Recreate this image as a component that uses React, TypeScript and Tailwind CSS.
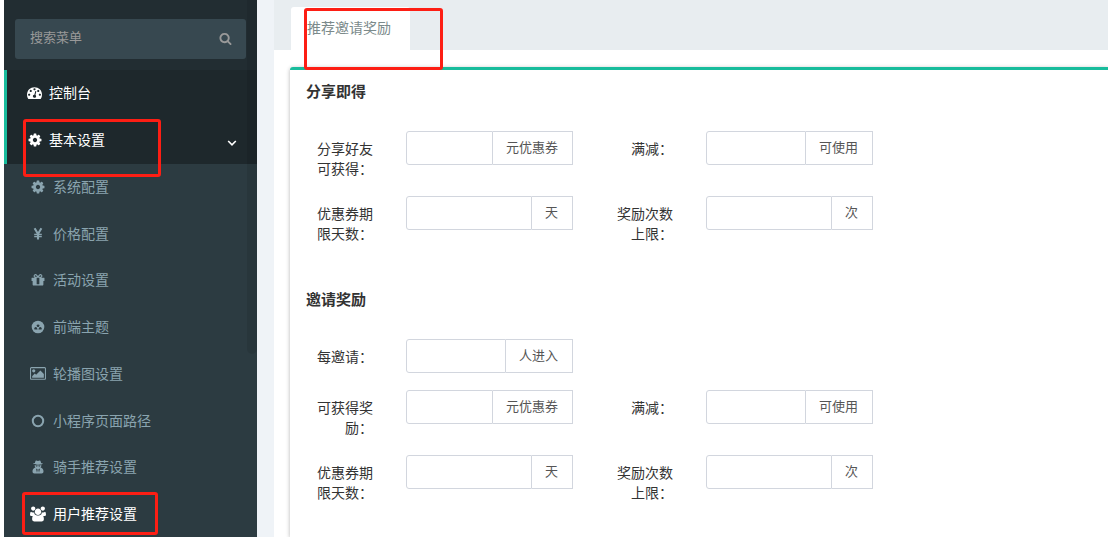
import type { ReactNode } from "react";

type Glyph = { box: string; width: string; path: string };

const glyphs: Record<string, Glyph> = {
  search: {
    box: "0 0 1792 1792",
    width: "w-[13px]",
    path: "M1216 832q0-185-131.5-316.5t-316.5-131.5-316.5 131.5-131.5 316.5 131.5 316.5 316.5 131.5 316.5-131.5 131.5-316.5zm512 832q0 52-38 90t-90 38q-54 0-90-38l-343-342q-179 124-399 124-143 0-273.5-55.5t-225-150-150-225-55.5-273.5 55.5-273.5 150-225 225-150 273.5-55.5 273.5 55.5 225 150 150 225 55.5 273.5q0 220-124 399l343 343q37 37 37 90z",
  },
  dashboard: {
    box: "0 0 1792 1792",
    width: "w-[15px]",
    path: "M384 1152q0-53-37.5-90.5t-90.5-37.5-90.5 37.5-37.5 90.5 37.5 90.5 90.5 37.5 90.5-37.5 37.5-90.5zm192-448q0-53-37.5-90.5t-90.5-37.5-90.5 37.5-37.5 90.5 37.5 90.5 90.5 37.5 90.5-37.5 37.5-90.5zm428 481l101-382q6-26-7.5-48.5t-38.5-29.5-48 6.5-30 39.5l-101 382q-60 5-107 43.5t-63 98.5q-20 77 20 146t117 89 146-20 89-117q16-60-6-117t-72-91zm660-33q0-53-37.5-90.5t-90.5-37.5-90.5 37.5-37.5 90.5 37.5 90.5 90.5 37.5 90.5-37.5 37.5-90.5zm-640-640q0-53-37.5-90.5t-90.5-37.5-90.5 37.5-37.5 90.5 37.5 90.5 90.5 37.5 90.5-37.5 37.5-90.5zm448 192q0-53-37.5-90.5t-90.5-37.5-90.5 37.5-37.5 90.5 37.5 90.5 90.5 37.5 90.5-37.5 37.5-90.5zm320 448q0 261-141 483-19 29-54 29h-1402q-35 0-54-29-141-221-141-483 0-182 71-348t191-286 286-191 348-71 348 71 286 191 191 286 71 348z",
  },
  cog: {
    box: "64 64 1664 1664",
    width: "w-[14px]",
    path: "M1152 896q0-106-75-181t-181-75-181 75-75 181 75 181 181 75 181-75 75-181zm512-109v222q0 12-8 23t-20 13l-185 28q-19 54-39 91 35 50 107 138 10 12 10 25t-9 23q-27 37-99 108t-94 71q-12 0-26-9l-138-108q-44 23-91 38-16 136-29 186-7 28-36 28h-222q-14 0-24.5-8.5t-11.5-21.5l-28-184q-49-16-90-37l-141 107q-10 9-25 9-14 0-25-11-126-114-165-168-7-10-7-23 0-12 8-23 15-21 51-66.5t54-70.5q-27-50-41-99l-183-27q-13-2-21-12.5t-8-23.5v-222q0-12 8-23t19-13l186-28q14-46 39-92-40-57-107-138-10-12-10-24 0-10 9-23 26-36 98.5-107.5t94.5-71.5q13 0 26 10l138 107q44-23 91-38 16-136 29-186 7-28 36-28h222q14 0 24.5 8.5t11.5 21.5l28 184q49 16 90 37l142-107q9-9 24-9 13 0 25 10 129 119 165 170 7 8 7 22 0 12-8 23-15 21-51 66.5t-54 70.5q26 50 41 98l183 28q13 2 21 12.5t8 23.5z",
  },
  gift: {
    box: "64 64 1664 1664",
    width: "w-[14px]",
    path: "M1056 1356v-716h-320v716q0 25 18 38.5t46 13.5h192q28 0 46-13.5t18-38.5zm-456-844h195l-126-161q-26-31-69-31-40 0-68 28t-28 68 28 68 68 28zm688-96q0-40-28-68t-68-28q-43 0-69 31l-125 161h194q40 0 68-28t28-68zm376 256v320q0 14-9 23t-23 9h-96v416q0 40-28 68t-68 28h-1088q-40 0-68-28t-28-68v-416h-96q-14 0-23-9t-9-23v-320q0-14 9-23t23-9h440q-93 0-158.5-65.5t-65.5-158.5 65.5-158.5 158.5-65.5q107 0 168 77l128 165 128-165q61-77 168-77 93 0 158.5 65.5t65.5 158.5-65.5 158.5-158.5 65.5h440q14 0 23 9t9 23z",
  },
  image: {
    box: "-64 0 1920 1792",
    width: "w-4",
    path: "M576 576q0 80-56 136t-136 56-136-56-56-136 56-136 136-56 136 56 56 136zm1024 384v448h-1408v-192l320-320 160 160 512-512zm96-704h-1600q-13 0-22.5 9.5t-9.5 22.5v1216q0 13 9.5 22.5t22.5 9.5h1600q13 0 22.5-9.5t9.5-22.5v-1216q0-13-9.5-22.5t-22.5-9.5zm160 32v1216q0 66-47 113t-113 47h-1600q-66 0-113-47t-47-113v-1216q0-66 47-113t113-47h1600q66 0 113 47t47 113z",
  },
  users: {
    box: "0 -64 1920 1792",
    width: "w-4",
    path: "M593 896q-162 5-265 128h-134q-82 0-138-40.5t-56-118.5q0-353 124-353 6 0 43.5 21t97.5 42.5 119 21.5q67 0 133-23-5 37-5 66 0 139 81 256zM1664 1405q0 120-73 189.5t-194 69.5h-874q-121 0-194-69.5t-73-189.5q0-53 3.5-103.5t14-109 26.5-108.5 43-97.5 62-81 85.5-53.5 111.5-20q10 0 43 21.5t73 48 107 48 135 21.5 135-21.5 107-48 73-48 43-21.5q61 0 111.5 20t85.5 53.5 62 81 43 97.5 26.5 108.5 14 109 3.5 103.5zm-1024-1277q0 106-75 181t-181 75-181-75-75-181 75-181 181-75 181 75 75 181zm704 384q0 159-112.5 271.5t-271.5 112.5-271.5-112.5-112.5-271.5 112.5-271.5 271.5-112.5 271.5 112.5 112.5 271.5zm576 353q0 78-56 118.5t-138 40.5h-134q-103-123-265-128 81-117 81-256 0-29-5-66 66 23 133 23 59 0 119-21.5t97.5-42.5 43.5-21q124 0 124 353zm-128-737q0 106-75 181t-181 75-181-75-75-181 75-181 181-75 181 75 75 181z",
  },
};

function Icon({ name }: { name: string }) {
  const g = glyphs[name];
  return (
    <svg viewBox={g.box} className={`${g.width} overflow-visible`} fill="currentColor" aria-hidden="true">
      <path d={g.path} />
    </svg>
  );
}

function YenIcon() {
  return (
    <svg viewBox="0 0 14 14" className="w-[14px]" fill="none" stroke="currentColor" aria-hidden="true">
      <path d="M3.6 1.2 7 7l3.4-5.8M7 6.5V12.6" strokeWidth="2.1" />
      <path d="M3.2 7.5h7.6M3.2 9.7h7.6" strokeWidth="1.3" />
    </svg>
  );
}

function ThemeIcon() {
  return (
    <svg viewBox="0 0 14 14" className="w-[14px]" aria-hidden="true">
      <circle cx="7" cy="7" r="6.3" fill="currentColor" />
      <g className="fill-[#2c3b41]">
        <path d="M5.5 5.6a1.6 1.6 0 0 1 3.1 0L7.7 6.9H6.4z" />
        <path d="M3.2 8.9a1.6 1.6 0 0 1 2.6-1.4l.8 2H3.5z" />
        <path d="M10.8 8.9a1.6 1.6 0 0 0-2.6-1.4l-.8 2h3.1z" />
      </g>
    </svg>
  );
}

function CircleIcon() {
  return (
    <svg viewBox="0 0 14 14" className="w-[14px]" fill="none" stroke="currentColor" strokeWidth="2" aria-hidden="true">
      <circle cx="7" cy="7" r="5.2" />
    </svg>
  );
}

function AgentIcon() {
  return (
    <svg viewBox="0 0 14 14" className="w-[14px]" fill="currentColor" aria-hidden="true">
      <path d="M4.7.8C5.2.2 6.2.9 7 .9S8.800.2 9.300.8c.4.600.7 1.500.8 2.200 1 .2 1.700.5 1.700.8 0 .5-2.100.9-4.800.9s-4.800-.4-4.800-.9c0-.3.7-.6 1.700-.8.1-.7.4-1.600.8-2.200z" />
      <path d="M3.700 4.900c1 .2 2.100.3 3.300.3s2.300-.1 3.300-.3c.1 1-.1 1.800-.7 2.600 1.900.5 2.900 2 2.900 4 0 1.200-.7 1.900-1.900 1.900H3.400c-1.200 0-1.900-.7-1.900-1.900 0-2 1-3.500 2.900-4-.6-.8-.8-1.600-.7-2.600z" />
      <g className="fill-[#2c3b41]">
        <path d="M4.500 5.500h2.100l-.3 1H5.100zM9.500 5.500H7.400l.3 1h1.200z" />
        <path d="M5 8.500 6.700 9.500 6 12.700zM9 8.500 7.300 9.500 8 12.700z" />
      </g>
    </svg>
  );
}

function Highlight({ className }: { className: string }) {
  return (
    <span
      className={`pointer-events-none absolute z-10 rounded-[3px] border-3 border-[#fd1e14] ${className}`}
      aria-hidden="true"
    />
  );
}

const subItems: { text: string; icon: ReactNode; active?: boolean }[] = [
  { text: "系统配置", icon: <Icon name="cog" /> },
  { text: "价格配置", icon: <YenIcon /> },
  { text: "活动设置", icon: <Icon name="gift" /> },
  { text: "前端主题", icon: <ThemeIcon /> },
  { text: "轮播图设置", icon: <Icon name="image" /> },
  { text: "小程序页面路径", icon: <CircleIcon /> },
  { text: "骑手推荐设置", icon: <AgentIcon /> },
  { text: "用户推荐设置", icon: <Icon name="users" />, active: true },
];

function Sidebar() {
  return (
    <aside className="relative w-[253px] shrink-0 bg-[#222d32]">
      <form className="mx-[11px] mt-[19px] mb-[11px] flex h-10 rounded-[3px] bg-[#374850]" onSubmit={(e) => e.preventDefault()}>
        <input
          type="text"
          aria-label="搜索菜单"
          placeholder="搜索菜单"
          className="min-w-0 flex-1 bg-transparent pb-0.5 pl-[15px] text-[13px] text-white outline-none placeholder:text-[#999]"
        />
        <button type="submit" aria-label="搜索" className="flex w-[42px] items-center justify-center pb-0.5 text-[#999]">
          <Icon name="search" />
        </button>
      </form>
      <nav>
        <div className="border-l-3 border-[#18bc9c] bg-[#1e282c] text-white">
          <a href="#dashboard" className="flex h-[47px] items-center pb-0.5 pl-5">
            <span className="mr-[7px] flex w-[15px] justify-center"><Icon name="dashboard" /></span>
            控制台
          </a>
          <a href="#basic" className="relative flex h-[47px] items-center pb-0.5 pl-5">
            <span className="mr-[7px] flex w-[15px] justify-center"><Icon name="cog" /></span>
            基本设置
            <svg viewBox="0 0 10 8" className="mt-1.5 mr-5 ml-auto w-[10px]" fill="none" stroke="currentColor" strokeWidth="1.6" aria-hidden="true">
              <path d="m1.2 2 3.8 3.8L8.800 2" />
            </svg>
            <Highlight className="top-[2px] left-4 h-[58px] w-[138px]" />
          </a>
        </div>
        <ul className="grid h-[374px] auto-rows-fr bg-[#2c3b41]">
          {subItems.map((item) => (
            <li key={item.text} className="grid">
              <a
                href={`#${item.text}`}
                className={`relative flex items-center pb-px pl-[26px] ${item.active ? "text-white" : "text-[#8aa4af]"}`}
              >
                <span className="mr-[7px] flex w-4 justify-center">{item.icon}</span>
                {item.text}
                {item.active && <Highlight className="top-px left-[18px] h-[43px] w-[136px]" />}
              </a>
            </li>
          ))}
        </ul>
      </nav>
      <span className="absolute top-0 right-0 h-[354px] w-[10px] rounded-b-[6px] bg-black/8" aria-hidden="true" />
    </aside>
  );
}

function Field({ id, label, unit }: { id: string; label: string; unit: string }) {
  return (
    <div className="flex items-start gap-[33px]">
      <label htmlFor={id} className="w-[67px] pt-2 text-right leading-5">
        {label}
      </label>
      <div className="flex h-[34px] min-w-0 flex-1">
        <input
          id={id}
          type="text"
          className="min-w-0 flex-1 rounded-l-[3px] border border-[#d2d6de] bg-white px-3 outline-none"
        />
        <span className="flex items-center border border-l-0 border-[#d2d6de] pr-[14px] pl-[13px] text-[13px] text-[#555]">
          {unit}
        </span>
      </div>
    </div>
  );
}

function Section({ title, children }: { title: string; children: ReactNode }) {
  return (
    <section>
      <h2 className="mb-[29px] text-[15px] leading-5 font-bold">{title}</h2>
      <div className="grid grid-cols-[267px_267px] gap-x-[33px] gap-y-[17px]">{children}</div>
    </section>
  );
}

export default function App() {
  return (
    <div className="flex h-screen overflow-hidden border-l-4 border-white bg-[#eff3f7] font-['Liberation_Sans','Noto_Sans_CJK_SC',sans-serif] text-sm text-[#333]">
      <Sidebar />
      <main className="ml-[17px] flex min-w-0 flex-1 flex-col bg-white">
        <div className="flex h-[50px] items-end bg-[#e8edf0] pl-[17px]">
          <a href="#reward" className="relative h-[43px] rounded-t-[3px] bg-white px-4 pt-[11px] leading-5 text-[#7b8a8b]">
            <span className="pr-[3px]">推荐邀请奖励</span>
            <Highlight className="top-px left-[13px] h-[62px] w-[139px]" />
          </a>
        </div>
        <div className="mt-[17px] ml-4 flex flex-1 flex-col gap-[46px] rounded-tl-[3px] border-t-3 border-[#18bc9c] bg-white px-4 pt-3 shadow-[0_1px_4px_rgba(0,0,0,0.3)]">
          <Section title="分享即得">
            <Field id="share-coupon" label="分享好友可获得：" unit="元优惠券" />
            <Field id="share-minimum" label="满减：" unit="可使用" />
            <Field id="share-days" label="优惠券期限天数：" unit="天" />
            <Field id="share-limit" label="奖励次数上限：" unit="次" />
          </Section>
          <Section title="邀请奖励">
            <div className="col-span-2 grid grid-cols-[267px]">
              <Field id="invite-count" label="每邀请：" unit="人进入" />
            </div>
            <Field id="invite-coupon" label="可获得奖励：" unit="元优惠券" />
            <Field id="invite-minimum" label="满减：" unit="可使用" />
            <Field id="invite-days" label="优惠券期限天数：" unit="天" />
            <Field id="invite-limit" label="奖励次数上限：" unit="次" />
          </Section>
        </div>
      </main>
    </div>
  );
}
